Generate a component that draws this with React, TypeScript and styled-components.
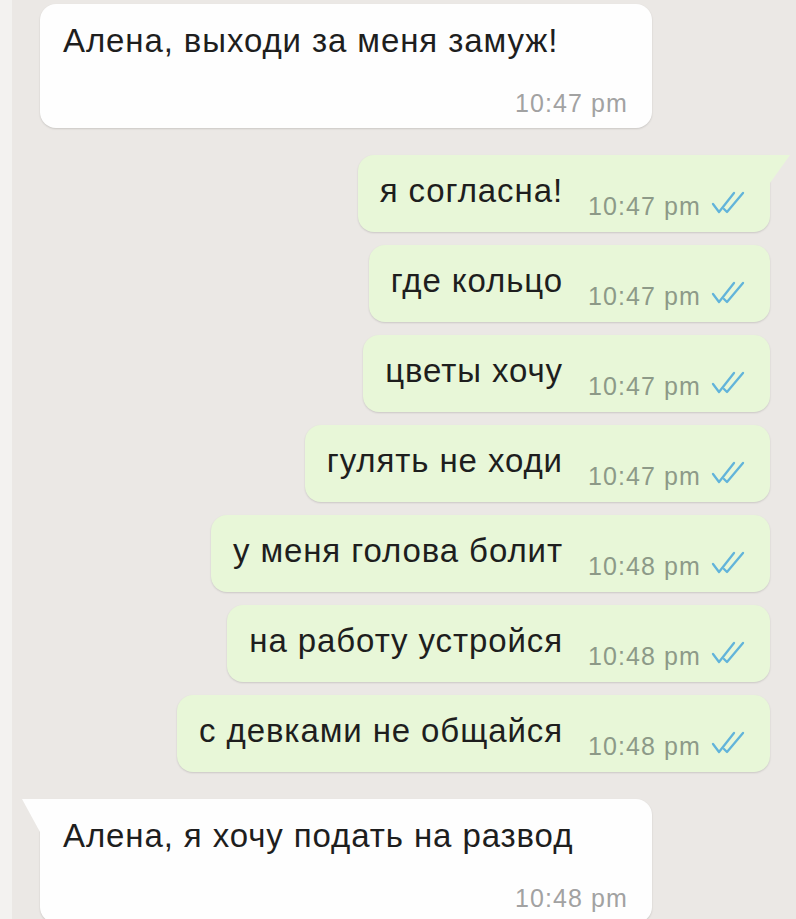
import React from "react";
import styled, { createGlobalStyle, css } from "styled-components";

const Global = createGlobalStyle`
  html, body { margin: 0; padding: 0; }
  body {
    background: #ebe8e5;
    font-family: "Liberation Sans", Arial, sans-serif;
    overflow: hidden;
  }
`;

const Page = styled.div`
  width: 796px;
  height: 919px;
  box-sizing: border-box;
  border-left: 12px solid #f3f2f0;
  padding: 4px 26px 0 28px;
  display: flex;
  flex-direction: column;
  overflow: hidden;
`;

const Bubble = styled.div<{ $tail?: boolean }>`
  position: relative;
  box-sizing: border-box;
  border-radius: 16px;
  box-shadow: 0 1px 2px rgba(0, 0, 0, 0.14);
`;

const InBubble = styled(Bubble)`
  align-self: flex-start;
  width: 612px;
  background: #fefefe;
  padding: 17px 24px 10px 23px;
  display: flex;
  flex-direction: column;
  ${(p) =>
    p.$tail &&
    css`
      border-top-left-radius: 0;
      &::before {
        content: "";
        position: absolute;
        left: -18px;
        top: 0;
        width: 18px;
        height: 33px;
        background: #fefefe;
        clip-path: polygon(0 0, 100% 0, 100% 100%);
      }
    `}
`;

const OutBubble = styled(Bubble)`
  align-self: flex-end;
  background: #e8f7d8;
  padding: 16px 22px 11px 22px;
  display: flex;
  align-items: flex-end;
  ${(p) =>
    p.$tail &&
    css`
      border-top-right-radius: 0;
      &::after {
        content: "";
        position: absolute;
        right: -20px;
        top: 0;
        width: 20px;
        height: 28px;
        background: #e8f7d8;
        clip-path: polygon(0 0, 100% 0, 0 100%);
      }
    `}
`;

const MsgText = styled.div<{ $out?: boolean }>`
  font-size: 33px;
  letter-spacing: 0.9px;
  line-height: 40px;
  color: #1e1e1e;
  white-space: nowrap;
  ${(p) => p.$out && css`margin-bottom: 10px;`}
`;

const Meta = styled.div<{ $out?: boolean }>`
  display: flex;
  align-items: flex-end;
  gap: 9px;
  font-size: 25px;
  letter-spacing: 1.1px;
  line-height: 30px;
  white-space: nowrap;
  color: ${(p) => (p.$out ? "#8d9a88" : "#a2a2a2")};
  ${(p) =>
    p.$out
      ? css`margin-left: 25px;`
      : css`align-self: flex-end; margin-top: 27px;`}
`;

const CheckIcon = styled.svg`
  width: 38px;
  height: 24px;
  margin-bottom: 6px;
  flex: none;
`;

const Checks = () => (
  <CheckIcon viewBox="0 0 38 24" fill="none" stroke="#62b4da" strokeWidth="2.3" strokeLinecap="round" strokeLinejoin="round">
    <path d="M3 13 L9 21 L24 2" />
    <path d="M14 18 L17 21 L33 2" />
  </CheckIcon>
);

const Spacer = styled.div<{ $h: number }>`
  height: ${(p) => p.$h}px;
  flex: none;
`;

const sent: [string, string][] = [
  ["я согласна!", "10:47 pm"],
  ["где кольцо", "10:47 pm"],
  ["цветы хочу", "10:47 pm"],
  ["гулять не ходи", "10:47 pm"],
  ["у меня голова болит", "10:48 pm"],
  ["на работу устройся", "10:48 pm"],
  ["с девками не общайся", "10:48 pm"],
];

export default function App() {
  return (
    <>
      <Global />
      <Page>
        <InBubble>
          <MsgText>Алена, выходи за меня замуж!</MsgText>
          <Meta>10:47 pm</Meta>
        </InBubble>
        <Spacer $h={27} />
        {sent.map(([t, time], i) => (
          <React.Fragment key={i}>
            {i > 0 && <Spacer $h={13} />}
            <OutBubble $tail={i === 0}>
              <MsgText $out>{t}</MsgText>
              <Meta $out>
                {time}
                <Checks />
              </Meta>
            </OutBubble>
          </React.Fragment>
        ))}
        <Spacer $h={27} />
        <InBubble $tail>
          <MsgText>Алена, я хочу подать на развод</MsgText>
          <Meta>10:48 pm</Meta>
        </InBubble>
      </Page>
    </>
  );
}
